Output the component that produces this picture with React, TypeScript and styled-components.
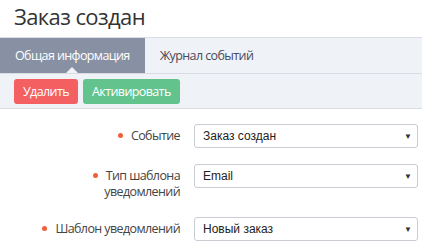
import React from "react";
import styled, { createGlobalStyle } from "styled-components";

const Global = createGlobalStyle`
  html, body { margin: 0; padding: 0; background: #fff; }
  body { font-family: "Open Sans", "Liberation Sans", sans-serif; width: 422px; height: 248px; overflow: hidden; }
`;

const Page = styled.div`
  display: flex;
  flex-direction: column;
`;

const Title = styled.h1`
  margin: 0;
  padding: 0 14px;
  height: 37px;
  font-size: 22px;
  letter-spacing: -0.6px;
  font-weight: 400;
  line-height: 32px;
  color: #333;
`;

const TabBar = styled.div`
  display: flex;
  height: 35px;
  background: #eff2f6;
  border-top: 1px solid #d9dde3;
  border-bottom: 1px solid #d9dde3;
`;

const Tab = styled.div<{ $active?: boolean }>`
  position: relative;
  display: flex;
  align-items: center;
  padding: 0 15px;
  font-size: 12.5px;
  letter-spacing: -0.6px;
  color: ${(p) => (p.$active ? "#fff" : "#4a4a5a")};
  background: ${(p) => (p.$active ? "#8891a4" : "transparent")};
  ${(p) =>
    p.$active &&
    `
    &::after {
      content: "";
      position: absolute;
      left: 50%;
      bottom: 0;
      margin-left: -6px;
      border-left: 6px solid transparent;
      border-right: 6px solid transparent;
      border-bottom: 6px solid #eff2f6;
    }
  `}
`;

const Toolbar = styled.div`
  display: flex;
  gap: 5px;
  padding: 5px 14px 4px;
  background: #eff2f6;
  border-bottom: 1px solid #d9dde3;
`;

const Button = styled.button<{ $tone: "danger" | "success" }>`
  height: 25px;
  padding: 0 9px;
  border: none;
  border-radius: 3px;
  font-family: "Open Sans", "Liberation Sans", sans-serif;
  font-size: 12.5px;
  letter-spacing: -0.6px;
  color: #fff;
  background: ${(p) => (p.$tone === "danger" ? "#f45f61" : "#62c38d")};
`;

const Form = styled.div`
  display: grid;
  grid-template-columns: 180px 224px;
  column-gap: 14px;
  row-gap: 16px;
  padding-top: 15px;
`;

const Label = styled.div`
  text-align: right;
  font-size: 12.5px;
  letter-spacing: -0.6px;
  line-height: 16px;
  color: #444;
  padding: 4px 0 1px 36px;
`;

const Dot = styled.span`
  display: inline-block;
  width: 5px;
  height: 5px;
  border-radius: 50%;
  background: #f0603a;
  margin-right: 8px;
  vertical-align: 2px;
`;

const Select = styled.div`
  height: 24px;
  box-sizing: border-box;
  border: 1px solid #c9cdd3;
  border-radius: 3px;
  display: flex;
  align-items: center;
  justify-content: space-between;
  padding: 0 5px 0 8px;
  font-family: "Liberation Sans", Arial, sans-serif;
  font-size: 12px;
  color: #222;
`;

const Arrow = styled.span`
  font-size: 8px;
  color: #333;
`;

const rows = [
  { label: "Событие", value: "Заказ создан" },
  { label: "Тип шаблона уведомлений", value: "Email" },
  { label: "Шаблон уведомлений", value: "Новый заказ" },
];

export default function App() {
  return (
    <Page>
      <Global />
      <Title>Заказ создан</Title>
      <TabBar>
        <Tab $active>Общая информация</Tab>
        <Tab>Журнал событий</Tab>
      </TabBar>
      <Toolbar>
        <Button $tone="danger">Удалить</Button>
        <Button $tone="success">Активировать</Button>
      </Toolbar>
      <Form>
        {rows.map((r) => (
          <React.Fragment key={r.label}>
            <Label>
              <Dot />
              {r.label}
            </Label>
            <Select>
              <span>{r.value}</span>
              <Arrow>▼</Arrow>
            </Select>
          </React.Fragment>
        ))}
      </Form>
    </Page>
  );
}
